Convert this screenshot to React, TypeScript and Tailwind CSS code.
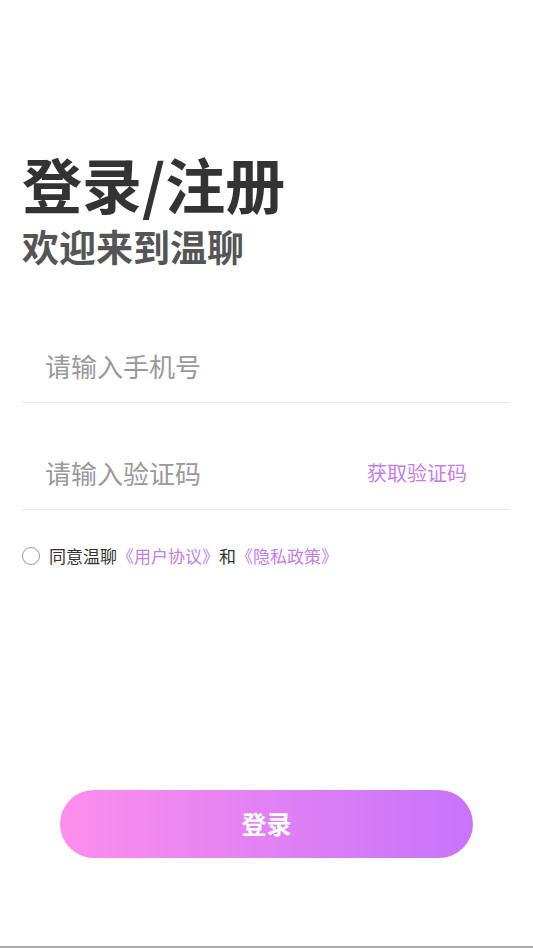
import { useState } from 'react';

export default function App() {
  const [phone, setPhone] = useState('');
  const [code, setCode] = useState('');
  const [agreed, setAgreed] = useState(false);

  return (
    <div
      className="h-[948px] w-full bg-white flex flex-col border-b-2 border-[#a9a9a9]"
      style={{ fontFamily: '"Noto Sans CJK SC", "Noto Sans", sans-serif' }}
    >
      <div className="px-[22px] pt-[153px]">
        <h1 className="text-[60px] leading-[60px] font-bold text-[#333333]">登录/注册</h1>
        <h2 className="text-[37px] leading-[37px] font-bold text-[#555555] mt-[15px]">欢迎来到温聊</h2>

        <div className="mt-[70px] h-[68px] pb-[6px] flex items-center border-b border-[#ececec]">
          <input
            value={phone}
            onChange={(e) => setPhone(e.target.value)}
            placeholder="请输入手机号"
            className="flex-1 pl-[23px] text-[26px] text-[#333] placeholder:text-[#9a9a9a] outline-none bg-transparent"
          />
        </div>

        <div className="mt-[39px] h-[68px] pb-[6px] flex items-center border-b border-[#ececec]">
          <input
            value={code}
            onChange={(e) => setCode(e.target.value)}
            placeholder="请输入验证码"
            className="flex-1 min-w-0 pl-[23px] text-[26px] text-[#333] placeholder:text-[#9a9a9a] outline-none bg-transparent"
          />
          <button className="mr-[44px] text-[20px] text-[#c77cea]">获取验证码</button>
        </div>

        <div className="mt-[36px] flex items-center text-[17px] leading-[20px]">
          <button
            onClick={() => setAgreed(!agreed)}
            className={`w-[18px] h-[18px] rounded-full border ${agreed ? 'border-[#c873fb] bg-[#c873fb]' : 'border-[#9a9a9a]'}`}
          />
          <span className="ml-[9px] text-[#333]">同意温聊</span>
          <span className="text-[#c77cea]">《用户协议》</span>
          <span className="text-[#333]">和</span>
          <span className="text-[#c77cea]">《隐私政策》</span>
        </div>
      </div>

      <div className="mt-auto mb-[88px] px-[60px]">
        <button className="w-full h-[68px] rounded-full bg-gradient-to-r from-[#fd8eec] to-[#c773fb] text-white text-[25px] font-bold">
          登录
        </button>
      </div>
    </div>
  );
}
